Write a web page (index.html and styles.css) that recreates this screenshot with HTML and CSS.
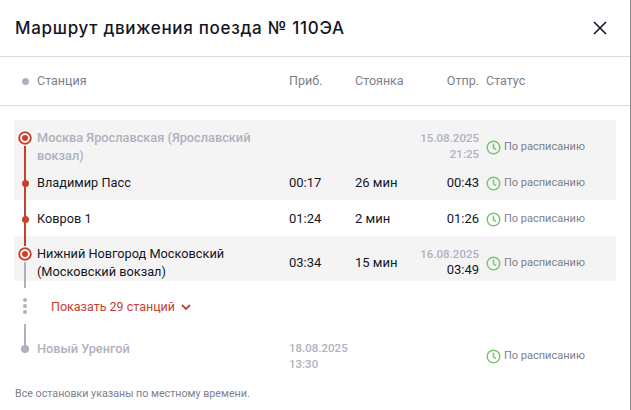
FILE: index.html
```html
<!DOCTYPE html>
<html lang="ru">
<head>
    <meta charset="UTF-8">
    <title>Маршрут движения поезда</title>
    <link rel="stylesheet" href="styles.css">
</head>
<body>
    <div class="modal">
        <div class="modal-head">
            <h1>Маршрут движения поезда № 110ЭА</h1>
            <svg class="close" width="16" height="16" viewBox="0 0 16 16"><path d="M2 2 14 14M14 2 2 14" stroke="#1b1f2a" stroke-width="1.7" fill="none"/></svg>
        </div>
        <div class="cols">
            <span class="cols-mark"><i></i></span>
            <span>Станция</span>
            <span>Приб.</span>
            <span>Стоянка</span>
            <span class="right">Отпр.</span>
            <span class="cols-status">Статус</span>
        </div>

        <div class="route">
            <div class="row tall shaded line-start muted">
                <span class="mark"><svg width="16" height="16" viewBox="0 0 16 16"><circle cx="8" cy="8" r="8" fill="#fff"/><circle cx="8" cy="8" r="5.8" fill="#fff" stroke="#c8402f" stroke-width="2"/><circle cx="8" cy="8" r="3" fill="#c8402f"/></svg></span>
                <span class="name">Москва Ярославская (Ярославский вокзал)</span>
                <span></span>
                <span></span>
                <span class="right dep"><small>15.08.2025</small>21:25</span>
                <span class="status"><svg width="15" height="15" viewBox="0 0 15 15"><circle cx="7.5" cy="7.5" r="6.3" fill="none" stroke="#7cc576" stroke-width="1.5"/><path d="M7.5 3.6v4.2l2.6 1.8" fill="none" stroke="#7cc576" stroke-width="1.5"/></svg>По расписанию</span>
            </div>
            <div class="row after-tall shaded line-full">
                <span class="mark"><i class="dot"></i></span>
                <span class="name">Владимир Пасс</span>
                <span>00:17</span>
                <span>26 мин</span>
                <span class="right">00:43</span>
                <span class="status"><svg width="15" height="15" viewBox="0 0 15 15"><circle cx="7.5" cy="7.5" r="6.3" fill="none" stroke="#7cc576" stroke-width="1.5"/><path d="M7.5 3.6v4.2l2.6 1.8" fill="none" stroke="#7cc576" stroke-width="1.5"/></svg>По расписанию</span>
            </div>
            <div class="row line-full">
                <span class="mark"><i class="dot"></i></span>
                <span class="name">Ковров 1</span>
                <span>01:24</span>
                <span>2 мин</span>
                <span class="right">01:26</span>
                <span class="status"><svg width="15" height="15" viewBox="0 0 15 15"><circle cx="7.5" cy="7.5" r="6.3" fill="none" stroke="#7cc576" stroke-width="1.5"/><path d="M7.5 3.6v4.2l2.6 1.8" fill="none" stroke="#7cc576" stroke-width="1.5"/></svg>По расписанию</span>
            </div>
            <div class="row tall shaded line-split">
                <span class="mark"><svg width="16" height="16" viewBox="0 0 16 16"><circle cx="8" cy="8" r="8" fill="#fff"/><circle cx="8" cy="8" r="5.8" fill="#fff" stroke="#c8402f" stroke-width="2"/><circle cx="8" cy="8" r="3" fill="#c8402f"/></svg></span>
                <span class="name">Нижний Новгород Московский (Московский вокзал)</span>
                <span class="mid">03:34</span>
                <span class="mid">15 мин</span>
                <span class="right dep"><small>16.08.2025</small>03:49</span>
                <span class="status"><svg width="15" height="15" viewBox="0 0 15 15"><circle cx="7.5" cy="7.5" r="6.3" fill="none" stroke="#7cc576" stroke-width="1.5"/><path d="M7.5 3.6v4.2l2.6 1.8" fill="none" stroke="#7cc576" stroke-width="1.5"/></svg>По расписанию</span>
            </div>

            <div class="more">
                <span class="more-dots"><i></i><i></i><i></i></span>
                <a href="#">Показать 29 станций
                    <svg width="10" height="7" viewBox="0 0 10 7"><path d="M1 1l4 4 4-4" fill="none" stroke="#c8402f" stroke-width="1.8"/></svg>
                </a>
            </div>

            <div class="row tall line-end muted">
                <span class="mark"><i class="dot grey"></i></span>
                <span class="name">Новый Уренгой</span>
                <span class="arr"><small>18.08.2025</small>13:30</span>
                <span></span>
                <span></span>
                <span class="status"><svg width="15" height="15" viewBox="0 0 15 15"><circle cx="7.5" cy="7.5" r="6.3" fill="none" stroke="#7cc576" stroke-width="1.5"/><path d="M7.5 3.6v4.2l2.6 1.8" fill="none" stroke="#7cc576" stroke-width="1.5"/></svg>По расписанию</span>
            </div>
        </div>

        <p class="note">Все остановки указаны по местному времени.</p>
    </div>
</body>
</html>
```

FILE: styles.css
```css
body {
    margin: 0;
    background: #8a8a8a;
    font-family: Roboto, "Noto Sans", sans-serif;
    font-size: 13px;
    line-height: 18px;
    color: #14161f;
}
.modal {
    width: 630px;
    height: 410px;
    background: white;
    overflow: hidden;
}
.modal-head {
    display: flex;
    justify-content: space-between;
    align-items: center;
    height: 56px;
    padding: 0 22px 0 15px;
    border-bottom: 1px solid #dcdcdc;
}
h1 {
    margin: 0;
    font-family: Inter, sans-serif;
    font-size: 17px;
    font-weight: 500;
    letter-spacing: 0.7px;
}
.cols {
    display: grid;
    grid-template-columns: 23px 252px 66px 60px 64px 1fr;
    align-items: center;
    height: 48px;
    padding-left: 14px;
    border-bottom: 1px solid #dcdcdc;
    color: #7d7f8a;
    font-size: 12.5px;
}
.cols-mark i {
    display: block;
    width: 7px;
    height: 7px;
    margin-left: 8px;
    border-radius: 50%;
    background: #b0b1bf;
}
.cols-status {
    padding-left: 7px;
}
.right {
    text-align: right;
}
.route {
    margin-top: 14px;
}
.row {
    position: relative;
    display: grid;
    grid-template-columns: 23px 252px 66px 60px 64px 1fr;
    width: 602px;
    margin-left: 14px;
    padding: 10px 0 8px;
}
.row.after-tall {
    padding: 9px 0 8px;
}
.row.tall {
    padding: 9px 0 0;
}
.shaded {
    background: #f4f4f4;
}
.muted {
    color: #b0b1bf;
    font-weight: 500;
}
.name {
    display: block;
    font-size: 12.75px;
}
.mid {
    align-self: center;
}
.mark {
    position: relative;
    z-index: 1;
    display: flex;
    align-items: center;
    justify-content: center;
    width: 22px;
    height: 18px;
}
.dot {
    display: block;
    width: 7px;
    height: 7px;
    border-radius: 50%;
    background: #c8402f;
}
.dot.grey {
    background: #b0b1bf;
    width: 8px;
    height: 8px;
}
.dep, .arr {
    align-self: center;
    line-height: 16px;
}
.dep {
    margin-top: -2px;
}
.muted .dep, .arr {
    font-size: 11.5px;
}
small {
    display: block;
    font-size: 11.5px;
    font-weight: 500;
    color: #b0b1bf;
}
.status {
    display: flex;
    align-items: center;
    gap: 3px;
    padding-left: 7px;
    align-self: center;
    font-size: 11px;
    font-weight: 400;
    color: #7d7f8a;
}

/* route line */
.row::before, .row::after {
    content: "";
    position: absolute;
    left: 10px;
    width: 2px;
    background: #c8402f;
}
.line-start::before { top: 17px; bottom: 0; }
.line-full::before { top: 0; bottom: 0; }
.line-split::before { top: 0; height: 18px; }
.line-split::after { top: 18px; bottom: -7px; background: #b0b1bf; }
.line-end::before { top: -7px; height: 22px; background: #b0b1bf; }

.more {
    display: flex;
    align-items: center;
    height: 50px;
    margin-left: 14px;
}
.more-dots {
    display: flex;
    flex-direction: column;
    gap: 2px;
    width: 37px;
    padding-left: 9px;
    box-sizing: border-box;
}
.more-dots i {
    display: block;
    width: 4px;
    height: 4px;
    border-radius: 50%;
    background: #b0b1bf;
}
.more a {
    display: flex;
    align-items: center;
    gap: 6px;
    margin-top: 2px;
    font-size: 12.5px;
    color: #c8402f;
    text-decoration: none;
}
.note {
    margin: 13px 0 0 15px;
    font-size: 10.7px;
    color: #7d7f8a;
}
```
